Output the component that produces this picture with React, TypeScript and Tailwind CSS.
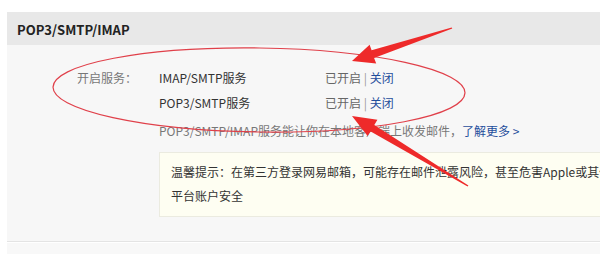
const cjk = { fontFamily: '"Microsoft YaHei", "Noto Sans CJK SC", sans-serif' };

// Two rows of mail service switches, each with its on/off state.
const services = [
  { name: "IMAP/SMTP服务", on: true },
  { name: "POP3/SMTP服务", on: true },
];

function Annotations() {
  // hand-drawn red markup over the screenshot: a loop round the rows and two arrows
  return (
    <svg className="pointer-events-none absolute left-0 top-0" width="600" height="256" viewBox="0 0 600 256">
      <ellipse
        cx="259"
        cy="90"
        rx="206"
        ry="42"
        transform="rotate(0.8 259 90)"
        fill="none"
        stroke="#e0404a"
        strokeWidth="1.2"
      />
      <polygon
        points="452.3,28.6 374.1,57.9 376.2,63.5 352,61 369.6,44.7 371.6,50.3 451.7,27.4"
        fill="#ee2a2a"
      />
      <polygon
        points="468.4,185.4 374.3,124.9 377.4,119.8 352,116 367.6,136.1 370.7,131.5 467.6,186.6"
        fill="#ee2a2a"
      />
    </svg>
  );
}

export default function App() {
  return (
    <div className="relative h-[256px] w-[600px] overflow-hidden bg-white" style={cjk}>
      <section className="ml-[7px] mt-[12px] bg-[#f7f7f7]">
        <h2 className="flex h-[33px] items-center bg-[#e8e8e8] pl-[10px] pt-[3px] text-[13px] font-bold text-[#222]">
          POP3/SMTP/IMAP
        </h2>
        <div className="border-b border-[#e4e4e4] pb-[24px] pl-[70px] pt-[20px] text-[12px]">
          {services.map((s, i) => (
            <div key={s.name} className="flex h-[25px] items-center">
              <span className="w-[82px] text-[#777]">{i === 0 ? "开启服务：" : ""}</span>
              <span className="w-[166px] text-[#333]">{s.name}</span>
              <span className="text-[#666]">
                已开启 <span className="text-[#999]">|</span> <a className="text-[#1f4e9c]">关闭</a>
              </span>
            </div>
          ))}
          <div className="ml-[82px] mt-[3px] flex h-[25px] items-center text-[#777]">
            POP3/SMTP/IMAP服务能让你在本地客户端上收发邮件，
            <a className="text-[#1f4e9c]">了解更多 &gt;</a>
          </div>
          <div className="ml-[82px] mt-[9px] w-[500px] whitespace-nowrap border border-[#ebebe0] bg-[#fefef2] pb-[8px] pl-[11px] pt-[7px] leading-[24px] text-[#333]">
            <p>温馨提示：在第三方登录网易邮箱，可能存在邮件泄露风险，甚至危害Apple或其他</p>
            <p>平台账户安全</p>
          </div>
        </div>
        <div className="h-[12px] border-t border-white bg-[#f8f8f8]" />
      </section>
      <Annotations />
    </div>
  );
}
